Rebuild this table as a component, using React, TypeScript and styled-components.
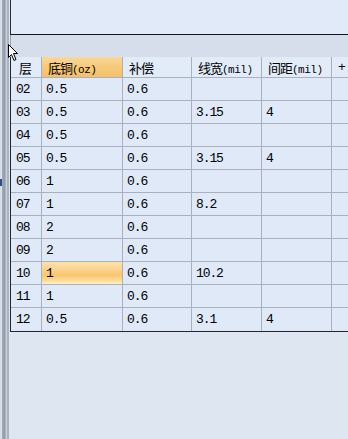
import React from "react";
import styled, { createGlobalStyle } from "styled-components";

const GlobalStyle = createGlobalStyle`
  html, body {
    margin: 0;
    padding: 0;
    background: #dde6f1;
    overflow: hidden;
  }
`;

const Page = styled.div`
  width: 348px;
  height: 439px;
  display: flex;
  position: relative;
  overflow: hidden;
  font-family: "Liberation Mono", "Noto Sans CJK SC", monospace;
  font-size: 13px;
  letter-spacing: -1.1px;
  color: #000;
`;

const Splitter = styled.div`
  width: 10px;
  flex: none;
  position: relative;
  background: linear-gradient(
    to right,
    #d9dfe8 0px,
    #d9dfe8 2px,
    #a3adbb 2px,
    #8f9aa9 5px,
    #c9d1dc 6px,
    #c9d1dc 7px,
    #aab3bf 7px,
    #aab3bf 9px,
    #dde6f1 9px
  );
  &::after {
    content: "";
    position: absolute;
    left: 0;
    top: 179px;
    width: 2px;
    height: 7px;
    background: #2c4f86;
  }
`;

const Main = styled.div`
  flex: 1;
  display: flex;
  flex-direction: column;
  min-width: 0;
`;

const TopPanel = styled.div`
  height: 34px;
  background: #e0eaf8;
  border-left: 1px solid #2a2d33;
  border-bottom: 1px solid #15171a;
`;

const Band = styled.div`
  height: 22px;
  background: #d5deea;
  border-left: 1px solid #9aa4b1;
`;

const Grid = styled.div`
  display: grid;
  grid-template-columns: 31px 81px 69px 70px 70px 40px;
  width: 373px;
  border-left: 1px solid #23262b;
  border-bottom: 1px solid #23262b;
  background: #dfe9f8;
`;

const HeadCell = styled.div<{ $active?: boolean; $pad?: number }>`
  height: 20px;
  line-height: 21px;
  padding-left: ${(p) => p.$pad ?? 6}px;
  border-right: 1px solid #a9b1bc;
  border-bottom: 1px solid #a9b1bc;
  background: ${(p) =>
    p.$active
      ? "linear-gradient(#f9d898 0%, #f7c978 50%, #f5c06a 100%)"
      : "#e2ebf8"};
  white-space: nowrap;
  overflow: hidden;
`;

const Cjk = styled.span`
  font-family: "Noto Sans CJK SC", sans-serif;
  font-size: 13px;
  letter-spacing: -1px;
`;

const Unit = styled.span`
  font-size: 11px;
  letter-spacing: -0.5px;
`;

const Cell = styled.div<{ $selected?: boolean; $first?: boolean }>`
  height: 22px;
  display: flex;
  align-items: center;
  padding-left: ${(p) => (p.$first ? "5px" : "4px")};
  border-right: 1px solid #a9b1bc;
  border-bottom: 1px solid #a9b1bc;
  background: ${(p) =>
    p.$selected
      ? "linear-gradient(#fde2aa 0%, #fbd28d 35%, #f9c66e 60%, #fcdc98 85%, #fff2c8 100%)"
      : "#dfe9f8"};
  white-space: nowrap;
  &:nth-last-child(-n + 6) {
    border-bottom: none;
    height: 23px;
  }
`;

const Cursor = styled.svg`
  position: absolute;
  left: 8px;
  top: 44px;
`;

const rows: [string, string, string, string, string][] = [
  ["02", "0.5", "0.6", "", ""],
  ["03", "0.5", "0.6", "3.15", "4"],
  ["04", "0.5", "0.6", "", ""],
  ["05", "0.5", "0.6", "3.15", "4"],
  ["06", "1", "0.6", "", ""],
  ["07", "1", "0.6", "8.2", ""],
  ["08", "2", "0.6", "", ""],
  ["09", "2", "0.6", "", ""],
  ["10", "1", "0.6", "10.2", ""],
  ["11", "1", "0.6", "", ""],
  ["12", "0.5", "0.6", "3.1", "4"],
];

export default function App() {
  return (
    <Page>
      <GlobalStyle />
      <Splitter />
      <Main>
        <TopPanel />
        <Band />
        <Grid>
          <HeadCell $pad={8}>
            <Cjk>层</Cjk>
          </HeadCell>
          <HeadCell $active>
            <Cjk>底铜</Cjk>
            <Unit>(oz)</Unit>
          </HeadCell>
          <HeadCell>
            <Cjk>补偿</Cjk>
          </HeadCell>
          <HeadCell>
            <Cjk>线宽</Cjk>
            <Unit>(mil)</Unit>
          </HeadCell>
          <HeadCell>
            <Cjk>间距</Cjk>
            <Unit>(mil)</Unit>
          </HeadCell>
          <HeadCell>+</HeadCell>
          {rows.map((r) => (
            <React.Fragment key={r[0]}>
              <Cell $first>{r[0]}</Cell>
              <Cell $selected={r[0] === "10"}>{r[1]}</Cell>
              <Cell>{r[2]}</Cell>
              <Cell>{r[3]}</Cell>
              <Cell>{r[4]}</Cell>
              <Cell />
            </React.Fragment>
          ))}
        </Grid>
      </Main>
      <Cursor width="12" height="18" viewBox="0 0 12 18">
        <path
          d="M0.5 0.5 L0.5 13.5 L3.5 10.5 L6 16.5 L8 15.5 L5.5 9.5 L9.5 9.5 Z"
          fill="#fff"
          stroke="#000"
          strokeWidth="1"
        />
      </Cursor>
    </Page>
  );
}
